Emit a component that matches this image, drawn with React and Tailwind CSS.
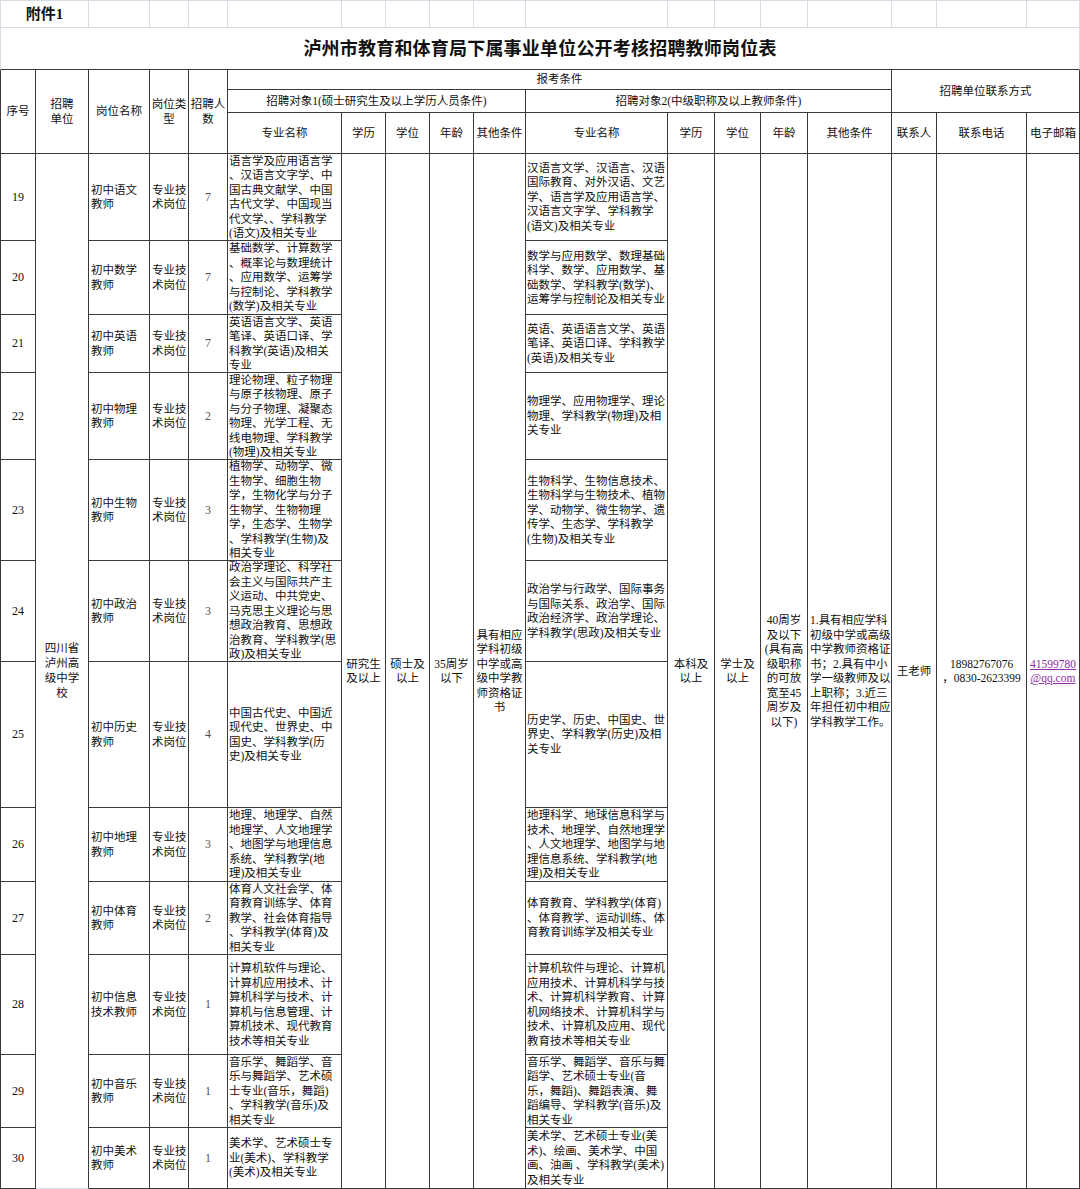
import { Fragment } from "react";

const B = "border-r border-b border-[#3a3a3a]";
const LIGHT = "border-r border-b border-[#d5dce6]";

const rows = [
  {
    no: 19,
    name: ["初中语文", "教师"],
    count: 7,
    m1: ["语言学及应用语言学", "、汉语言文字学、中", "国古典文献学、中国", "古代文学、中国现当", "代文学、、学科教学", "(语文)及相关专业"],
    m2: ["汉语言文学、汉语言、汉语", "国际教育、对外汉语、文艺", "学、语言学及应用语言学、", "汉语言文字学、学科教学", "(语文)及相关专业"],
  },
  {
    no: 20,
    name: ["初中数学", "教师"],
    count: 7,
    m1: ["基础数学、计算数学", "、概率论与数理统计", "、应用数学、运筹学", "与控制论、学科教学", "(数学)及相关专业"],
    m2: ["数学与应用数学、数理基础", "科学、数学、应用数学、基", "础数学、学科教学(数学)、", "运筹学与控制论及相关专业"],
  },
  {
    no: 21,
    name: ["初中英语", "教师"],
    count: 7,
    m1: ["英语语言文学、英语", "笔译、英语口译、学", "科教学(英语)及相关", "专业"],
    m2: ["英语、英语语言文学、英语", "笔译、英语口译、学科教学", "(英语)及相关专业"],
  },
  {
    no: 22,
    name: ["初中物理", "教师"],
    count: 2,
    m1: ["理论物理、粒子物理", "与原子核物理、原子", "与分子物理、凝聚态", "物理、光学工程、无", "线电物理、学科教学", "(物理)及相关专业"],
    m2: ["物理学、应用物理学、理论", "物理、学科教学(物理)及相", "关专业"],
  },
  {
    no: 23,
    name: ["初中生物", "教师"],
    count: 3,
    m1: ["植物学、动物学、微", "生物学、细胞生物", "学，生物化学与分子", "生物学、生物物理", "学，生态学、生物学", "、学科教学(生物)及", "相关专业"],
    m2: ["生物科学、生物信息技术、", "生物科学与生物技术、植物", "学、动物学、微生物学、遗", "传学、生态学、学科教学", "(生物)及相关专业"],
  },
  {
    no: 24,
    name: ["初中政治", "教师"],
    count: 3,
    m1: ["政治学理论、科学社", "会主义与国际共产主", "义运动、中共党史、", "马克思主义理论与思", "想政治教育、思想政", "治教育、学科教学(思", "政)及相关专业"],
    m2: ["政治学与行政学、国际事务", "与国际关系、政治学、国际", "政治经济学、政治学理论、", "学科教学(思政)及相关专业"],
  },
  {
    no: 25,
    name: ["初中历史", "教师"],
    count: 4,
    m1: ["中国古代史、中国近", "现代史、世界史、中", "国史、学科教学(历", "史)及相关专业"],
    m2: ["历史学、历史、中国史、世", "界史、学科教学(历史)及相", "关专业"],
  },
  {
    no: 26,
    name: ["初中地理", "教师"],
    count: 3,
    m1: ["地理、地理学、自然", "地理学、人文地理学", "、地图学与地理信息", "系统、学科教学(地", "理)及相关专业"],
    m2: ["地理科学、地球信息科学与", "技术、地理学、自然地理学", "、人文地理学、地图学与地", "理信息系统、学科教学(地", "理)及相关专业"],
  },
  {
    no: 27,
    name: ["初中体育", "教师"],
    count: 2,
    m1: ["体育人文社会学、体", "育教育训练学、体育", "教学、社会体育指导", "、学科教学(体育)及", "相关专业"],
    m2: ["体育教育、学科教学(体育)", "、体育教学、运动训练、体", "育教育训练学及相关专业"],
  },
  {
    no: 28,
    name: ["初中信息", "技术教师"],
    count: 1,
    m1: ["计算机软件与理论、", "计算机应用技术、计", "算机科学与技术、计", "算机与信息管理、计", "算机技术、现代教育", "技术等相关专业"],
    m2: ["计算机软件与理论、计算机", "应用技术、计算机科学与技", "术、计算机科学教育、计算", "机网络技术、计算机科学与", "技术、计算机及应用、现代", "教育技术等相关专业"],
  },
  {
    no: 29,
    name: ["初中音乐", "教师"],
    count: 1,
    m1: ["音乐学、舞蹈学、音", "乐与舞蹈学、艺术硕", "士专业(音乐，舞蹈)", "、学科教学(音乐)及", "相关专业"],
    m2: ["音乐学、舞蹈学、音乐与舞", "蹈学、艺术硕士专业(音", "乐，舞蹈)、舞蹈表演、舞", "蹈编导、学科教学(音乐)及", "相关专业"],
  },
  {
    no: 30,
    name: ["初中美术", "教师"],
    count: 1,
    m1: ["美术学、艺术硕士专", "业(美术)、学科教学", "(美术)及相关专业"],
    m2: ["美术学、艺术硕士专业(美", "术)、绘画、美术学、中国", "画、油画 、学科教学(美术)", "及相关专业"],
  },
];

// rough width guess so over-long lines get squeezed instead of clipped
const guessWidth = (t) => {
  let w = 0;
  for (const ch of t) {
    if (/[\u3000-\u9fff\uff00-\uffef]/.test(ch)) w += 11.5;
    else if (ch === " ") w += 2.9;
    else w += 4;
  }
  return w;
};

function Lines({ items, max = 999, className = "" }) {
  return items.map((t, i) => (
    <div
      key={i}
      className={`whitespace-nowrap ${guessWidth(t) > max ? "tracking-[-0.6px]" : ""} ${className}`}
    >
      {t}
    </div>
  ));
}

function Cell({ className = "", children }) {
  return (
    <div className={`${B} flex flex-col justify-center overflow-hidden ${className}`}>
      {children}
    </div>
  );
}

function Head({ className = "", children }) {
  return (
    <Cell className={`items-center text-center ${className}`}>{children}</Cell>
  );
}

const topCols = [
  "col-span-1", "col-span-1", "col-span-1", "col-span-1", "col-span-1", "col-span-1",
  "col-span-1", "col-span-1", "col-span-1", "col-span-1", "col-span-1", "col-span-1",
  "col-span-1", "col-span-1", "col-span-1", "col-span-1",
];

export default function App() {
  const first = rows[0];

  return (
    <div className="w-[1080px] h-[1189px] overflow-hidden bg-white text-[#111] text-[11.5px] leading-[14.5px] font-['Liberation_Serif','Noto_Sans_CJK_SC',serif]">
      <div className="grid grid-cols-[36px_53px_61px_39px_39px_114px_44px_44px_44px_52px_142px_47px_46px_47px_84px_45px_90px_53px] grid-rows-[28px_42px_20px_23px_41px_87px_74px_58px_87px_101px_101px_146px_74px_73px_100px_73px_61px]">
        {/* sheet row above the table */}
        <div className={`${LIGHT} border-t border-l col-span-2 flex items-center justify-center text-[15px] font-bold`}>
          附件1
        </div>
        {topCols.map((c, i) => (
          <div key={i} className={`${LIGHT} border-t ${c}`} />
        ))}

        {/* title */}
        <div className="col-span-18 border-l border-r border-l-[#d5dce6] border-r-[#d5dce6] border-b border-b-[#3a3a3a] flex items-center justify-center pt-[2px] text-[18px] font-bold tracking-[0.2px]">
          泸州市教育和体育局下属事业单位公开考核招聘教师岗位表
        </div>

        {/* header */}
        <Head className="row-span-3 border-l">序号</Head>
        <Head className="row-span-3">
          <Lines items={["招聘", "单位"]} className="leading-[15px]" />
        </Head>
        <Head className="row-span-3">岗位名称</Head>
        <Head className="row-span-3">
          <Lines items={["岗位类", "型"]} className="leading-[15px]" />
        </Head>
        <Head className="row-span-3">
          <Lines items={["招聘人", "数"]} className="leading-[15px]" />
        </Head>
        <Head className="col-span-10">报考条件</Head>
        <Head className="col-span-3 row-span-2">招聘单位联系方式</Head>
        <Head className="col-span-5">招聘对象1(硕士研究生及以上学历人员条件)</Head>
        <Head className="col-span-5">招聘对象2(中级职称及以上教师条件)</Head>
        {["专业名称", "学历", "学位", "年龄", "其他条件", "专业名称", "学历", "学位", "年龄", "其他条件", "联系人", "联系电话", "电子邮箱"].map(
          (h, i) => (
            <Head key={i}>
              <span className="whitespace-nowrap">{h}</span>
            </Head>
          )
        )}

        {/* first data row, carries the merged columns */}
        <Head className="border-l text-[12px]">{first.no}</Head>
        <Cell className="row-span-12 items-center text-center border-b-[#d5dce6]">
          <Lines items={["四川省", "泸州高", "级中学", "校"]} className="leading-[15px]" />
        </Cell>
        <Cell className="px-[2px]">
          <Lines items={first.name} />
        </Cell>
        <Cell className="px-[2px]">
          <Lines items={["专业技", "术岗位"]} />
        </Cell>
        <Head className="text-[12px] text-[#555]">{first.count}</Head>
        <Cell className="px-[1px]">
          <Lines items={first.m1} max={111} />
        </Cell>
        <Head className="row-span-12">
          <Lines items={["研究生", "及以上"]} />
        </Head>
        <Head className="row-span-12">
          <Lines items={["硕士及", "以上"]} />
        </Head>
        <Head className="row-span-12">
          <Lines items={["35周岁", "以下"]} />
        </Head>
        <Head className="row-span-12">
          <Lines items={["具有相应", "学科初级", "中学或高", "级中学教", "师资格证", "书"]} />
        </Head>
        <Cell className="px-[1px]">
          <Lines items={first.m2} max={139} />
        </Cell>
        <Head className="row-span-12">
          <Lines items={["本科及", "以上"]} />
        </Head>
        <Head className="row-span-12">
          <Lines items={["学士及", "以上"]} />
        </Head>
        <Head className="row-span-12">
          <Lines items={["40周岁", "及以下", "(具有高", "级职称", "的可放", "宽至45", "周岁及", "以下)"]} />
        </Head>
        <Cell className="row-span-12 px-[2px]">
          <Lines
            items={["1.具有相应学科", "初级中学或高级", "中学教师资格证", "书；2.具有中小", "学一级教师及以", "上职称；3.近三", "年担任初中相应", "学科教学工作。"]}
            max={81}
          />
        </Cell>
        <Head className="row-span-12">王老师</Head>
        <Head className="row-span-12">
          <Lines items={["18982767076", "，0830-2623399"]} />
        </Head>
        <Head className="row-span-12 text-[#8e2fa6]">
          <Lines items={["41599780", "@qq.com"]} className="underline" />
        </Head>

        {/* remaining rows fill the free cells */}
        {rows.slice(1).map((r) => (
          <Fragment key={r.no}>
            <Head className="border-l text-[12px]">{r.no}</Head>
            <Cell className="px-[2px]">
              <Lines items={r.name} />
            </Cell>
            <Cell className="px-[2px]">
              <Lines items={["专业技", "术岗位"]} />
            </Cell>
            <Head className="text-[12px] text-[#555]">{r.count}</Head>
            <Cell className="px-[1px]">
              <Lines items={r.m1} max={111} />
            </Cell>
            <Cell className="px-[1px]">
              <Lines items={r.m2} max={139} />
            </Cell>
          </Fragment>
        ))}
      </div>
    </div>
  );
}
